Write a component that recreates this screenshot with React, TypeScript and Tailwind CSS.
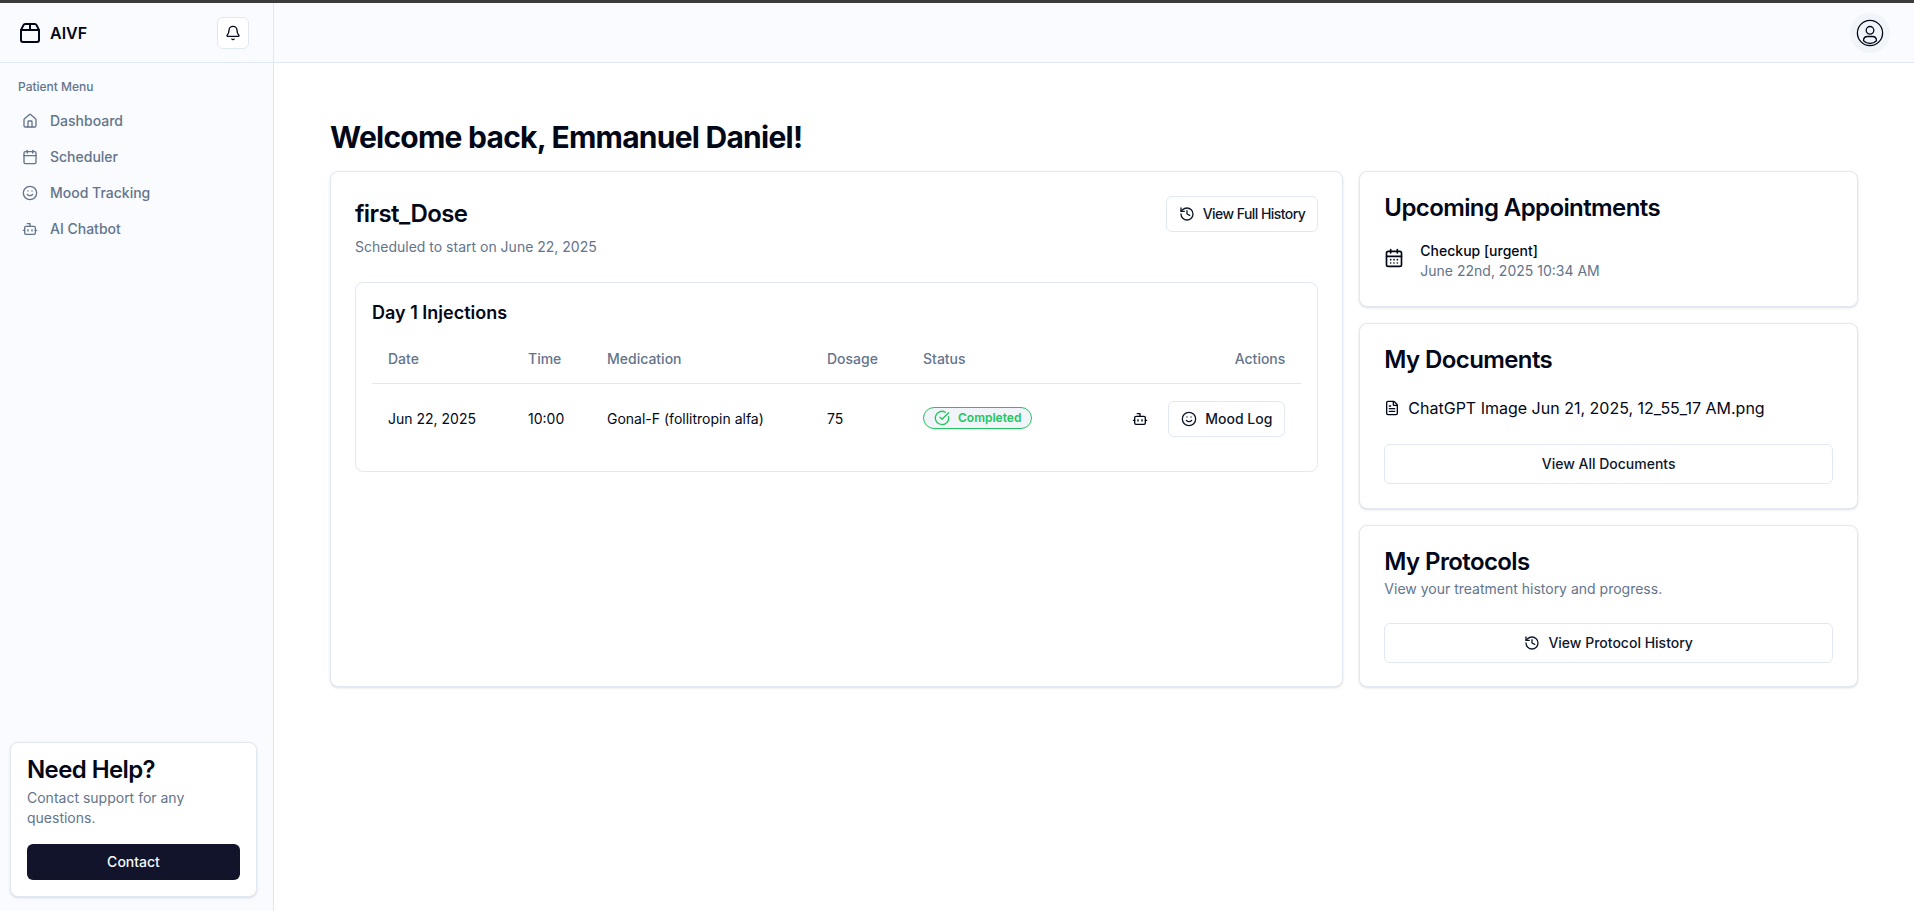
import React from "react";
import { Package2, Bell, House, Calendar, Smile, Bot, History, CircleCheckBig, CalendarDays, FileText } from "lucide-react";

const cardCls = "rounded-lg border border-[#e2e8f2] bg-white shadow-sm";
const btnCls = "flex items-center justify-center rounded-md border border-[#e2e8f2] bg-white text-sm font-medium text-[#0f172a]";

const nav = [
  { label: "Dashboard", Icon: House },
  { label: "Scheduler", Icon: Calendar },
  { label: "Mood Tracking", Icon: Smile },
  { label: "AI Chatbot", Icon: Bot },
];

function UserIcon() {
  return (
    <svg width="28" height="28" viewBox="0 0 28 28" fill="none" stroke="#020817" strokeWidth="1.3">
      <circle cx="14" cy="14" r="12.6" />
      <circle cx="14" cy="11.3" r="3.800" />
      <path d="M7.500 21.800c0-2.800 1.800-4.300 4-4.300h5c2.200 0 4 1.500 4 4.300c-1.700 1.700-4 2.700-6.500 2.700s-4.800-1-6.500-2.700z" />
    </svg>
  );
}

export default function App() {
  return (
    <div className="flex h-[911px] flex-col overflow-hidden bg-white font-['Inter',sans-serif] text-[#020817]">
      <div className="h-[3px] shrink-0 bg-[#3c3c3c]" />
      <div className="flex min-h-0 flex-1">
        <aside className="flex w-[274px] shrink-0 flex-col border-r border-[#e2e8f2] bg-[#f9fbfe]">
          <div className="flex h-[60px] shrink-0 items-center justify-between border-b border-[#e2e8f2] pl-[18px] pr-6">
            <div className="flex items-center gap-2">
              <Package2 size={24} strokeWidth={2} />
              <span className="text-base font-semibold">AIVF</span>
            </div>
            <button className="flex h-8 w-8 items-center justify-center rounded-md border border-[#e2e8f2] bg-white">
              <Bell size={16} />
            </button>
          </div>
          <div className="flex-1 px-3.5 pt-4">
            <div className="pl-1 text-xs font-medium text-[#64748b]">Patient Menu</div>
            <nav className="mt-2 flex flex-col">
              {nav.map(({ label, Icon }) => (
                <div key={label} className="flex h-9 items-center gap-3 px-2 text-sm font-medium text-[#64748b]">
                  <Icon size={16} />
                  <span>{label}</span>
                </div>
              ))}
            </nav>
          </div>
          <div className={`${cardCls} mb-[14px] ml-2.5 mr-4 p-4`}>
            <h3 className="text-2xl leading-[22px] font-semibold tracking-tight">Need Help?</h3>
            <p className="mt-[7px] text-sm text-[#64748b]">Contact support for any questions.</p>
            <button className="mt-4 flex h-9 w-full items-center justify-center rounded-md bg-[#11142b] text-sm font-medium text-[#f8fafc]">
              Contact
            </button>
          </div>
        </aside>
        <div className="flex min-w-0 flex-1 flex-col">
          <header className="flex h-[60px] shrink-0 items-center justify-end border-b border-[#e2e8f2] bg-[#f9fbfe] pr-6">
            <div className="flex h-10 w-10 items-center justify-center rounded-full bg-[#f1f5f9]">
              <UserIcon />
            </div>
          </header>
          <main className="flex-1 px-14 pt-14">
            <h1 className="text-3xl font-bold tracking-tight">Welcome back, Emmanuel Daniel!</h1>
            <div className="mt-4 grid grid-cols-3 gap-4">
              <section className={`${cardCls} col-span-2 p-6`}>
                <div className="flex items-start justify-between">
                  <div>
                    <h2 className="text-2xl leading-9 font-semibold tracking-tight">first_Dose</h2>
                    <p className="mt-[5px] text-sm text-[#64748b]">Scheduled to start on June 22, 2025</p>
                  </div>
                  <button className={`${btnCls} h-9 gap-2 px-3 tracking-[-0.55px]`}>
                    <History size={16} />
                    View Full History
                  </button>
                </div>
                <div className="mt-[25px] rounded-lg border border-[#e2e8f2] p-4">
                  <h3 className="text-lg leading-7 font-semibold">Day 1 Injections</h3>
                  <table className="mt-2 w-full table-fixed text-sm">
                    <thead>
                      <tr className="border-b border-[#e2e8f2] text-left text-[#64748b]">
                        <th className="h-12 w-[140px] px-4 font-medium">Date</th>
                        <th className="w-[79px] px-4 font-medium">Time</th>
                        <th className="w-[220px] px-4 font-medium">Medication</th>
                        <th className="w-[96px] px-4 font-medium">Dosage</th>
                        <th className="px-4 font-medium">Status</th>
                        <th className="w-[250px] px-4 text-right font-medium">Actions</th>
                      </tr>
                    </thead>
                    <tbody>
                      <tr>
                        <td className="h-[72px] px-4">Jun 22, 2025</td>
                        <td className="px-4">10:00</td>
                        <td className="px-4">Gonal-F (follitropin alfa)</td>
                        <td className="px-4">75</td>
                        <td className="px-4">
                          <span className="inline-flex h-[22px] items-center gap-2 whitespace-nowrap rounded-full border border-[#22c55e] bg-[#f1f5f9] px-2.5 text-xs font-semibold text-[#22c55e]">
                            <CircleCheckBig size={16} />
                            Completed
                          </span>
                        </td>
                        <td className="px-4">
                          <div className="flex items-center justify-end gap-2.5">
                            <button className="flex h-9 w-9 items-center justify-center">
                              <Bot size={16} />
                            </button>
                            <button className={`${btnCls} h-9 gap-2 px-3`}>
                              <Smile size={16} />
                              Mood Log
                            </button>
                          </div>
                        </td>
                      </tr>
                    </tbody>
                  </table>
                </div>
              </section>
              <div className="flex flex-col gap-4">
                <section className={`${cardCls} px-6 pb-[25px] pt-6`}>
                  <h2 className="text-2xl leading-6 font-semibold tracking-tight">Upcoming Appointments</h2>
                  <div className="mt-[21px] flex items-start gap-4">
                    <div className="pt-[7px]">
                      <CalendarDays size={20} />
                    </div>
                    <div className="text-sm">
                      <div className="font-medium">Checkup [urgent]</div>
                      <div className="text-[#64748b]">June 22nd, 2025 10:34 AM</div>
                    </div>
                  </div>
                </section>
                <section className={`${cardCls} p-6`}>
                  <h2 className="text-2xl leading-6 font-semibold tracking-tight">My Documents</h2>
                  <div className="mt-6 flex items-center gap-2">
                    <FileText size={16} />
                    <span className="text-base">ChatGPT Image Jun 21, 2025, 12_55_17 AM.png</span>
                  </div>
                  <button className={`${btnCls} mt-6 h-10 w-full`}>View All Documents</button>
                </section>
                <section className={`${cardCls} px-6 pb-[23px] pt-6`}>
                  <h2 className="text-2xl leading-6 font-semibold tracking-tight">My Protocols</h2>
                  <p className="mt-[5px] text-sm text-[#64748b]">View your treatment history and progress.</p>
                  <button className={`${btnCls} mt-6 h-10 w-full gap-2`}>
                    <History size={16} />
                    View Protocol History
                  </button>
                </section>
              </div>
            </div>
          </main>
        </div>
      </div>
    </div>
  );
}
